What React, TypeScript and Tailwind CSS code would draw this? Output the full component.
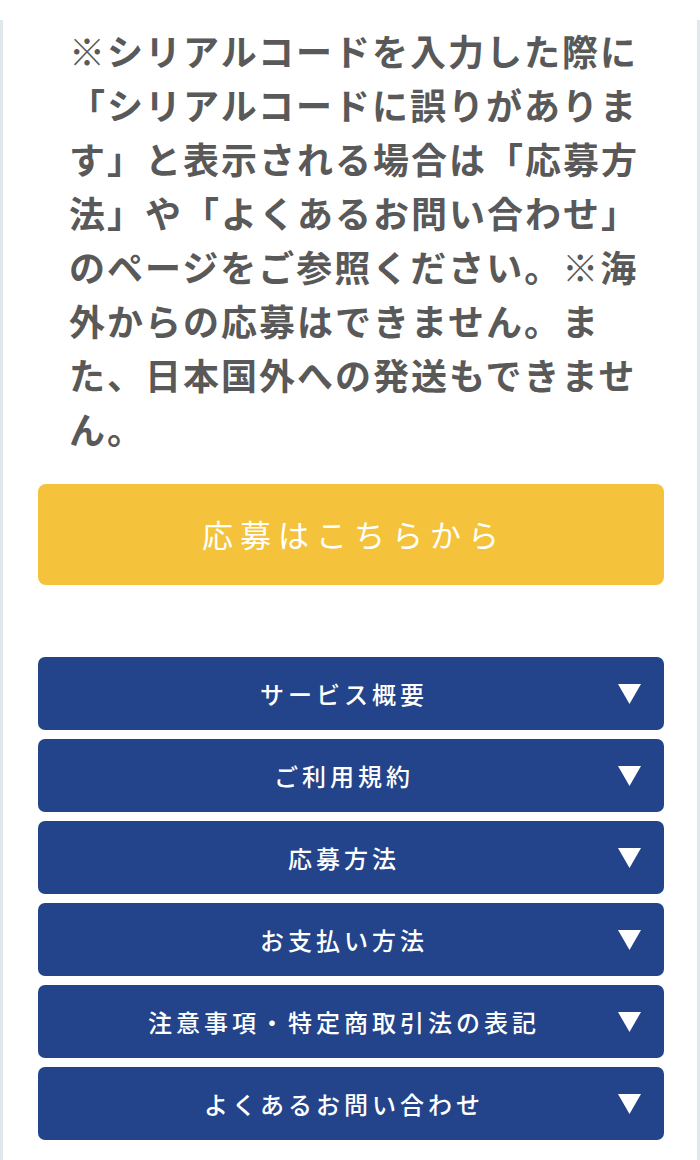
import React from "react";

const items = [
  "サービス概要",
  "ご利用規約",
  "応募方法",
  "お支払い方法",
  "注意事項・特定商取引法の表記",
  "よくあるお問い合わせ",
];

export default function App() {
  return (
    <div
      className="w-[700px] h-[1160px] bg-white overflow-hidden"
      style={{ fontFamily: '"Noto Sans CJK JP", "Noto Sans", sans-serif' }}
    >
      <div className="mt-[20px] h-[1140px] border-x-[3px] border-[#e1e8ec] px-[35px] pt-[3px]">
        <p className="ml-[31px] w-[574px] text-[36px] leading-[54px] tracking-[2px] font-bold text-[#595959]">
          ※シリアルコードを入力した際に「シリアルコードに誤りがあります」と表示される場合は「応募方法」や「よくあるお問い合わせ」のページをご参照ください。※海外からの応募はできません。また、日本国外への発送もできません。
        </p>
        <button className="mt-[29px] flex h-[101px] w-[626px] items-center justify-center rounded-[8px] bg-[#f4c33b] pl-[6px] text-[31px] font-normal tracking-[7px] text-white">
          応募はこちらから
        </button>
        <div className="mt-[72px] flex w-[626px] flex-col gap-[9px]">
          {items.map((t) => (
            <div
              key={t}
              className="relative flex h-[73px] items-center justify-center rounded-[7px] bg-[#23448a] pr-[14px] text-[24px] font-medium tracking-[4px] text-white"
            >
              <span>{t}</span>
              <svg
                className="absolute right-[23px] top-1/2 -translate-y-1/2"
                width="23"
                height="20"
                viewBox="0 0 23 20"
              >
                <polygon points="0,0 23,0 11.5,20" fill="#ffffff" />
              </svg>
            </div>
          ))}
        </div>
      </div>
    </div>
  );
}
